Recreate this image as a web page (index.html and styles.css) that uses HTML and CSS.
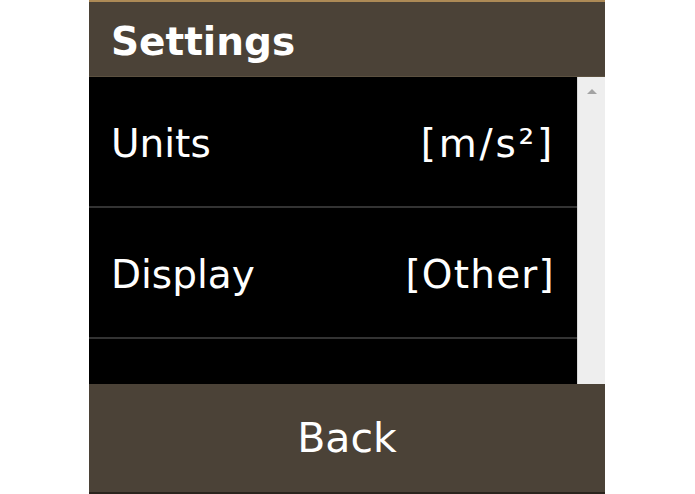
FILE: index.html
```html
<!DOCTYPE html>
<html>
<head>
<meta charset="utf-8">
<link rel="stylesheet" href="styles.css">
</head>
<body>
<div class="device">
  <div class="header">Settings</div>
  <div class="body">
    <div class="list">
      <div class="row"><span class="label">Units</span><span class="value wide">[m/s²]</span></div>
      <div class="row"><span class="label">Display</span><span class="value">[Other]</span></div>
      <div class="row partial"></div>
    </div>
    <div class="scrollbar"><div class="arrow"></div></div>
  </div>
  <div class="back">Back</div>
</div>
</body>
</html>
```
FILE: styles.css
```css
html, body {
  margin: 0;
  padding: 0;
  background: #ffffff;
}
.device {
  margin-left: 89px;
  width: 516px;
  height: 494px;
  display: flex;
  flex-direction: column;
  font-family: "DejaVu Sans", Verdana, sans-serif;
  color: #ffffff;
  border-top: 2px solid #ad8a56;
  box-sizing: border-box;
}
.header {
  height: 75px;
  background: #4b4237;
  display: flex;
  align-items: center;
  padding: 4px 0 0 22px;
  font-weight: bold;
  font-size: 39px;
  box-sizing: border-box;
  border-bottom: 1px solid #5c5140;
}
.body {
  height: 307px;
  display: flex;
  background: #000;
  overflow: hidden;
}
.list {
  flex: 1;
  display: flex;
  flex-direction: column;
}
.row {
  height: 131px;
  flex: none;
  box-sizing: border-box;
  border-bottom: 2px solid #333333;
  display: flex;
  align-items: center;
  justify-content: space-between;
  padding: 4px 22px 0 22px;
  font-size: 39px;
}
.value {
  letter-spacing: 1.2px;
}
.value.wide {
  letter-spacing: 2.8px;
}
.row.partial {
  border-bottom: none;
}
.scrollbar {
  width: 28px;
  background: #eeeeee;
  border-left: 1px solid #d6d6d6;
  box-sizing: border-box;
  display: flex;
  justify-content: center;
  padding-top: 12px;
}
.arrow {
  width: 0;
  height: 0;
  border-left: 5px solid transparent;
  border-right: 5px solid transparent;
  border-bottom: 5px solid #a3a3a3;
}
.back {
  flex: 1;
  background: #4b4237;
  display: flex;
  align-items: center;
  justify-content: center;
  font-size: 41px;
  border-bottom: 2px solid #2a241d;
}
```
